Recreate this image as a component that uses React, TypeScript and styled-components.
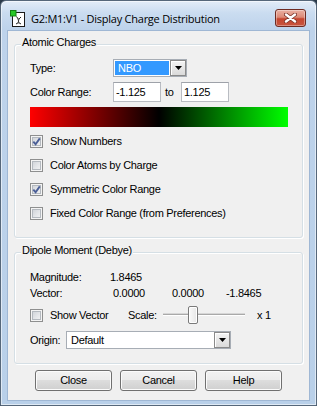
import React from "react";
import styled, { createGlobalStyle } from "styled-components";

const Global = createGlobalStyle`
  html, body { margin: 0; padding: 0; background: #2b3a4a; }
  body { width: 317px; height: 406px; overflow: hidden; }
  * { box-sizing: border-box; }
`;

const Window = styled.div`
  width: 317px;
  height: 406px;
  border: 1px solid #56677a;
  border-radius: 6px 6px 0 0;
  background: linear-gradient(to bottom, #e3ecf8 0px, #cadcf0 12px, #bed3eb 28px, #b9d0e9 100%);
  box-shadow: inset 0 0 0 1px rgba(255, 255, 255, 0.55);
  padding: 0 6px 4px;
  display: flex;
  flex-direction: column;
  font-family: "Liberation Sans", Arial, sans-serif;
  font-size: 11px;
  letter-spacing: -0.3px;
  color: #000;
`;

const TitleBar = styled.div`
  height: 29px;
  flex: none;
  display: flex;
  align-items: flex-start;
  padding-left: 3px;
`;

const TitleIcon = styled.svg`
  margin-top: 9px;
  flex: none;
`;

const TitleText = styled.span`
  margin: 10px 0 0 5px;
  font-family: "Open Sans", "Noto Sans", sans-serif;
  font-size: 11px;
  line-height: 16px;
  letter-spacing: -0.25px;
  white-space: nowrap;
`;

const CloseButton = styled.div`
  margin: 8px 4px 0 auto;
  width: 31px;
  height: 18px;
  border: 1px solid #6e2b22;
  border-radius: 3px;
  background: linear-gradient(to bottom, #eab0a2 0%, #dc8a77 45%, #c5462f 55%, #c8553f 100%);
  box-shadow: inset 0 0 0 1px rgba(255, 255, 255, 0.35);
  display: flex;
  align-items: center;
  justify-content: center;
`;

const Client = styled.div`
  flex: 1;
  border: 1px solid #9fb7d4;
  background: #f0f0f0;
  padding: 13px 6px 0;
  display: flex;
  flex-direction: column;
`;

const GroupBox = styled.section<{ $pad: string; $mt?: number }>`
  position: relative;
  margin-top: ${(p) => p.$mt ?? 0}px;
  border: 1px solid #d5dfe5;
  border-radius: 3px;
  box-shadow: 1px 1px 0 #fff, inset 1px 1px 0 #fff;
  padding: ${(p) => p.$pad};
  display: flex;
  flex-direction: column;
`;

const Caption = styled.span`
  position: absolute;
  top: -9px;
  left: 6px;
  padding: 0 1px;
  line-height: 13px;
  background: #f0f0f0;
  white-space: nowrap;
`;

const Stack = styled.div`
  display: flex;
  flex-direction: column;
  gap: 5px;
`;

const FieldRow = styled.div<{ $h: number; $label: number }>`
  height: ${(p) => p.$h}px;
  display: grid;
  grid-template-columns: ${(p) => p.$label}px auto;
  align-items: center;
  line-height: 13px;
`;

const Inline = styled.div`
  display: flex;
  align-items: center;
  height: 100%;
`;

const Combo = styled.div<{ $w: number }>`
  width: ${(p) => p.$w}px;
  height: 18px;
  border: 1px solid #a7adb5;
  background: #fff;
  display: flex;
`;

const ComboValue = styled.div<{ $selected?: boolean }>`
  flex: 1;
  margin: ${(p) => (p.$selected ? "1px" : "0")};
  padding-left: ${(p) => (p.$selected ? "3px" : "4px")};
  background: ${(p) => (p.$selected ? "#3399ff" : "#fff")};
  color: ${(p) => (p.$selected ? "#fff" : "#000")};
  display: flex;
  align-items: center;
  line-height: 13px;
`;

const ComboArrow = styled.div`
  width: 16px;
  flex: none;
  border: 1px solid #8a8a8a;
  background: linear-gradient(to bottom, #f4f4f4, #dadada);
  box-shadow: inset 1px 1px 0 #fff;
  display: flex;
  align-items: center;
  justify-content: center;
`;

const TextBox = styled.div`
  width: 48px;
  height: 20px;
  border: 1px solid #b9bcc2;
  border-top-color: #9ea2a9;
  background: #fff;
  padding: 0 2px;
  display: flex;
  align-items: center;
  line-height: 13px;
`;

const ToLabel = styled.span`
  width: 16px;
  margin-left: 4px;
`;

const GradientBar = styled.div`
  height: 20px;
  background: linear-gradient(to right, #ff0000 0%, #000000 50%, #00ff00 100%);
`;

const CheckList = styled.div`
  margin-top: 2px;
  display: flex;
  flex-direction: column;
`;

const CheckRow = styled.div<{ $h?: number; $mt?: number }>`
  height: ${(p) => p.$h ?? 24}px;
  margin-top: ${(p) => p.$mt ?? 0}px;
  display: flex;
  align-items: center;
  gap: 7px;
  line-height: 13px;
  white-space: nowrap;
`;

const Box = styled.span`
  width: 13px;
  height: 13px;
  flex: none;
  border: 1px solid #8e8f8f;
  background: linear-gradient(135deg, #c9cdd3 0%, #e4e6e9 55%, #f7f7f7 100%);
  box-shadow: inset 0 0 0 1px #f4f4f4, inset 0 0 0 2px #b4b9bf;
  display: flex;
  align-items: center;
  justify-content: center;
`;

const DataRow = styled.div<{ $cols: string; $h: number }>`
  height: ${(p) => p.$h}px;
  display: grid;
  grid-template-columns: ${(p) => p.$cols};
  align-items: center;
  line-height: 13px;
  white-space: nowrap;
`;

const OriginRow = styled(FieldRow)`
  margin-top: 5px;
`;

const FixedLabel = styled.span<{ $w: number }>`
  width: ${(p) => p.$w}px;
  flex: none;
`;

const Slider = styled.div`
  position: relative;
  width: 82px;
  height: 22px;
  flex: none;
  &::before {
    content: "";
    position: absolute;
    left: 0;
    right: 0;
    top: 10px;
    height: 1px;
    background: #a9a9a9;
    box-shadow: 0 1px 0 #ffffff, 0 -1px 0 #d6d6d6;
  }
`;

const Thumb = styled.span`
  position: absolute;
  top: 2px;
  width: 10px;
  height: 18px;
  border: 1px solid #7a7a7a;
  border-radius: 2px;
  background: linear-gradient(to right, #fafafa, #e6e6e6);
  box-shadow: inset 0 0 0 1px #ffffff;
`;

const ScaleValue = styled.span`
  margin-left: 5px;
`;

const ButtonRow = styled.div`
  margin-top: 6px;
  display: flex;
  justify-content: center;
  gap: 8px;
`;

const PushButton = styled.div`
  width: 77px;
  height: 21px;
  border: 1px solid #707070;
  border-radius: 3px;
  background: linear-gradient(to bottom, #f2f2f2 0%, #ebebeb 50%, #dddddd 50%, #cfcfcf 100%);
  box-shadow: inset 0 0 0 1px #fbfbfb;
  display: flex;
  align-items: center;
  justify-content: center;
  line-height: 13px;
`;

const Arrow = () => (
  <svg width="7" height="4" viewBox="0 0 7 4">
    <path d="M0 0H7L3.5 4Z" fill="#000" />
  </svg>
);

const Check = ({ on }: { on?: boolean }) => (
  <Box>
    {on && (
      <svg width="9" height="9" viewBox="0 0 9 9">
        <path d="M1.3 4.6 L3.6 7.2 L7.8 1.4" fill="none" stroke="#4b5f97" strokeWidth="1.9" strokeLinejoin="miter" />
      </svg>
    )}
  </Box>
);

const AppIcon = () => (
  <TitleIcon width="16" height="17" viewBox="0 0 16 17">
    <rect x="2.5" y="2.5" width="12" height="14" fill="#fff" stroke="#1a1a1a" />
    <path d="M8.5 9.5 L6.5 6.5 M8.5 9.5 L11 7 M8.5 9.5 L8.5 12.5 M8.5 12.5 L6 14 M8.5 12.5 L11 14" stroke="#222" strokeWidth="1" />
    <circle cx="8.5" cy="9.5" r="1" fill="#555" />
    <circle cx="8.5" cy="12.5" r="0.9" fill="#555" />
    <rect x="0.5" y="0.5" width="5.5" height="5.5" fill="#27c827" stroke="#138013" />
  </TitleIcon>
);

const CloseX = () => (
  <svg width="13" height="10" viewBox="0 0 13 10">
    <path d="M2 1.5 L11 8.5 M11 1.5 L2 8.5" stroke="#7b3328" strokeWidth="4" strokeLinecap="round" />
    <path d="M2 1.5 L11 8.5 M11 1.5 L2 8.5" stroke="#ffffff" strokeWidth="2.4" strokeLinecap="round" />
  </svg>
);

const options = [
  { label: "Show Numbers", on: true },
  { label: "Color Atoms by Charge", on: false },
  { label: "Symmetric Color Range", on: true },
  { label: "Fixed Color Range (from Preferences)", on: false },
];

export default function App() {
  return (
    <>
      <Global />
      <Window>
        <TitleBar>
          <AppIcon />
          <TitleText>G2:M1:V1 - Display Charge Distribution</TitleText>
          <CloseButton>
            <CloseX />
          </CloseButton>
        </TitleBar>
        <Client>
          <GroupBox $pad="14px 14px 12px 15px">
            <Caption>Atomic Charges</Caption>
            <Stack>
              <FieldRow $h={18} $label={83}>
                <span>Type:</span>
                <Combo $w={74}>
                  <ComboValue $selected>NBO</ComboValue>
                  <ComboArrow>
                    <Arrow />
                  </ComboArrow>
                </Combo>
              </FieldRow>
              <FieldRow $h={20} $label={83}>
                <span>Color Range:</span>
                <Inline>
                  <TextBox>-1.125</TextBox>
                  <ToLabel>to</ToLabel>
                  <TextBox>1.125</TextBox>
                </Inline>
              </FieldRow>
              <GradientBar />
            </Stack>
            <CheckList>
              {options.map((o) => (
                <CheckRow key={o.label}>
                  <Check on={o.on} />
                  <span>{o.label}</span>
                </CheckRow>
              ))}
            </CheckList>
          </GroupBox>
          <GroupBox $pad="16px 14px 14px 15px" $mt={14}>
            <Caption>Dipole Moment (Debye)</Caption>
            <DataRow $h={16} $cols="80px auto">
              <span>Magnitude:</span>
              <span>1.8465</span>
            </DataRow>
            <DataRow $h={16} $cols="83px 59px 54px auto">
              <span>Vector:</span>
              <span>0.0000</span>
              <span>0.0000</span>
              <span>-1.8465</span>
            </DataRow>
            <CheckRow $h={22} $mt={3}>
              <Check />
              <FixedLabel $w={71}>Show Vector</FixedLabel>
              <FixedLabel $w={28}>Scale:</FixedLabel>
              <Slider>
                <Thumb style={{ left: 25 }} />
              </Slider>
              <ScaleValue>x 1</ScaleValue>
            </CheckRow>
            <OriginRow $h={18} $label={36}>
              <span>Origin:</span>
              <Combo $w={165}>
                <ComboValue>Default</ComboValue>
                <ComboArrow>
                  <Arrow />
                </ComboArrow>
              </Combo>
            </OriginRow>
          </GroupBox>
          <ButtonRow>
            <PushButton>Close</PushButton>
            <PushButton>Cancel</PushButton>
            <PushButton>Help</PushButton>
          </ButtonRow>
        </Client>
      </Window>
    </>
  );
}
